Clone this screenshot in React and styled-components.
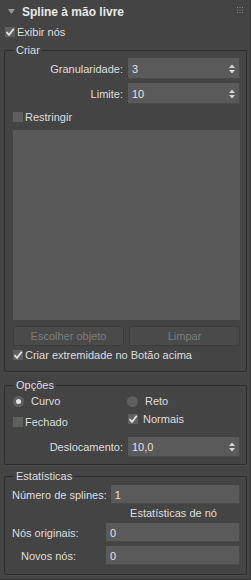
import React from "react";
import styled, { createGlobalStyle } from "styled-components";

const Global = createGlobalStyle`
  html, body { margin: 0; padding: 0; background: #444444; }
  body { font-family: "Liberation Sans", Arial, sans-serif; font-size: 11px; color: #dedede; }
  * { box-sizing: border-box; }
`;

const Panel = styled.div`
  width: 251px;
  height: 580px;
  background: #444444;
  border-right: 1px solid #383838;
  border-bottom: 1px solid #383838;
  padding: 0 3px 0 4px;
  display: flex;
  flex-direction: column;
  overflow: hidden;
`;

const Header = styled.div`
  height: 24px;
  display: flex;
  align-items: center;
  padding-left: 4px;
  gap: 7px;
  position: relative;
`;

const Title = styled.span`
  font-weight: bold;
  font-size: 12px;
  color: #e8e8e8;
`;

const Grip = styled.svg`
  position: absolute;
  right: 4px;
  top: 7px;
`;

const CheckRow = styled.label`
  display: flex;
  align-items: center;
  height: 16px;
  gap: ${(p) => p.$gap || 2}px;
  margin-top: ${(p) => p.$mt || 0}px;
  margin-left: ${(p) => p.$ml || 0}px;
`;

const Box = styled.span`
  width: 10px;
  height: 10px;
  background: #5f5f5f;
  display: inline-flex;
  align-items: center;
  justify-content: center;
  flex: none;
`;

const Check = ({ checked }) => (
  <Box>
    {checked && (
      <svg width="10" height="10" viewBox="0 0 10 10">
        <path d="M1.5 5.2 L4 7.8 L8.8 1.8" stroke="#e4e4e4" strokeWidth="1.8" fill="none" />
      </svg>
    )}
  </Box>
);

const Group = styled.fieldset`
  margin: ${(p) => p.$mt || 0}px 0 0 0;
  border: 1px solid #2e2e2e;
  box-shadow: 0 1px 0 #4c4c4c;
  border-radius: 2px;
  padding: ${(p) => p.$pt || 1}px 6px ${(p) => p.$pb || 8}px 8px;
  min-width: 0;
`;

const Legend = styled.legend`
  padding: 0 2px;
  margin-left: 1px;
  line-height: 14px;
  height: 14px;
  font-size: 11px;
  color: #dedede;
`;

const FieldGrid = styled.div`
  display: grid;
  grid-template-columns: 1fr 112px;
  column-gap: 5px;
  row-gap: ${(p) => p.$gap || 4}px;
  align-items: center;
  margin-top: ${(p) => p.$mt || 0}px;
`;

const Label = styled.span`
  text-align: right;
  white-space: nowrap;
`;

const Input = styled.div`
  height: ${(p) => p.$h || 21}px;
  background: #5a5a5a;
  box-shadow: inset -1px -1px 0 #4a4a4a;
  display: flex;
  align-items: center;
  padding-left: 4px;
  padding-right: 5px;
  color: #e2e2e2;
`;

const Value = styled.span`
  flex: 1;
`;

const Spin = () => (
  <svg width="6" height="10" viewBox="0 0 6 10">
    <path d="M0 4 L3 0.5 L6 4 Z" fill="#d6d6d6" />
    <path d="M0 6 L3 9.5 L6 6 Z" fill="#d6d6d6" />
  </svg>
);

const ListArea = styled.div`
  height: 190px;
  background: #595959;
  margin-top: 5px;
`;

const ButtonRow = styled.div`
  display: grid;
  grid-template-columns: 1fr 1fr;
  column-gap: 5px;
  margin-top: 6px;
`;

const Button = styled.div`
  height: 20px;
  border: 1px solid #3d3d3d;
  background: #4a4a4a;
  border-radius: 2px;
  display: flex;
  align-items: center;
  justify-content: center;
  color: #7c7c7c;
`;

const TwoCol = styled.div`
  display: grid;
  grid-template-columns: 1fr 112px;
  column-gap: 5px;
  align-items: start;
  margin-top: ${(p) => p.$mt || 0}px;
`;

const RadioRow = styled.label`
  display: flex;
  align-items: center;
  height: 16px;
  gap: 7px;
  margin-left: ${(p) => p.$ml || 0}px;
`;

const RadioCircle = styled.span`
  width: 11px;
  height: 11px;
  border-radius: 50%;
  background: #5f5f5f;
  display: inline-flex;
  align-items: center;
  justify-content: center;
  flex: none;
`;

const Dot = styled.span`
  width: 5px;
  height: 5px;
  border-radius: 50%;
  background: #e6e6e6;
`;

const Radio = ({ checked }) => <RadioCircle>{checked && <Dot />}</RadioCircle>;

const StatRow = styled.div`
  display: grid;
  grid-template-columns: ${(p) => p.$cols};
  column-gap: ${(p) => p.$gap}px;
  align-items: center;
  margin: ${(p) => p.$mt || 0}px 0 0 -1px;
`;

const Caption = styled.div`
  text-align: center;
  padding-left: 94px;
  height: 16px;
  line-height: 16px;
  margin-top: 1px;
`;

const dots = [0, 2.5, 5];

export default function App() {
  return (
    <>
      <Global />
      <Panel>
        <Header>
          <svg width="7" height="6" viewBox="0 0 7 6">
            <path d="M0 0 L7 0 L3.5 5 Z" fill="#9a9a9a" />
          </svg>
          <Title>Spline à mão livre</Title>
          <Grip width="6" height="6" viewBox="0 0 6 6">
            {dots.flatMap((x) =>
              dots.map((y) => (
                <rect key={`${x}-${y}`} x={x} y={y} width="1" height="1" fill="#8a8a8a" />
              ))
            )}
          </Grip>
        </Header>
        <CheckRow $ml={1}>
          <Check checked />
          <span>Exibir nós</span>
        </CheckRow>

        <Group $mt={3} $pt={1} $pb={8}>
          <Legend>Criar</Legend>
          <FieldGrid $gap={4}>
            <Label>Granularidade:</Label>
            <Input>
              <Value>3</Value>
              <Spin />
            </Input>
            <Label>Limite:</Label>
            <Input>
              <Value>10</Value>
              <Spin />
            </Input>
          </FieldGrid>
          <CheckRow $mt={5}>
            <Check />
            <span>Restringir</span>
          </CheckRow>
          <ListArea />
          <ButtonRow>
            <Button>Escolher objeto</Button>
            <Button>Limpar</Button>
          </ButtonRow>
          <CheckRow $mt={1}>
            <Check checked />
            <span>Criar extremidade no Botão acima</span>
          </CheckRow>
        </Group>

        <Group $mt={6} $pt={1} $pb={7}>
          <Legend>Opções</Legend>
          <TwoCol>
            <RadioRow>
              <Radio checked />
              <span>Curvo</span>
            </RadioRow>
            <RadioRow $ml={-1}>
              <Radio />
              <span>Reto</span>
            </RadioRow>
          </TwoCol>
          <TwoCol $mt={2}>
            <CheckRow $mt={3}>
              <Check />
              <span>Fechado</span>
            </CheckRow>
            <CheckRow $gap={5}>
              <Check checked />
              <span>Normais</span>
            </CheckRow>
          </TwoCol>
          <FieldGrid $mt={7}>
            <Label>Deslocamento:</Label>
            <Input $h={20}>
              <Value>10,0</Value>
              <Spin />
            </Input>
          </FieldGrid>
        </Group>

        <Group $mt={4} $pt={2} $pb={9}>
          <Legend>Estatísticas</Legend>
          <StatRow $cols="auto 1fr" $gap={4}>
            <Label>Número de splines:</Label>
            <Input $h={19}>
              <Value>1</Value>
            </Input>
          </StatRow>
          <Caption>Estatísticas de nó</Caption>
          <StatRow $cols="64px 1fr" $gap={30} $mt={2}>
            <Label>Nós originais:</Label>
            <Input $h={19}>
              <Value>0</Value>
            </Input>
          </StatRow>
          <StatRow $cols="64px 1fr" $gap={30} $mt={4}>
            <Label>Novos nós:</Label>
            <Input $h={19}>
              <Value>0</Value>
            </Input>
          </StatRow>
        </Group>
      </Panel>
    </>
  );
}
